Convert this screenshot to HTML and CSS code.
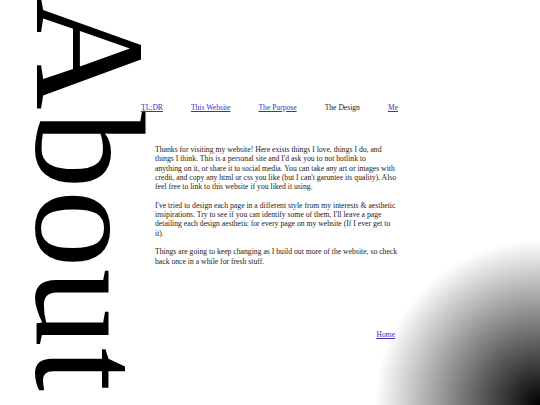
FILE: index.html
```html
<!DOCTYPE html>
<html lang="en">
<head>
<meta charset="utf-8">
<title>About</title>
<link rel="stylesheet" href="styles.css">
</head>
<body>
<div class="page">
  <h1 class="title">About</h1>
  <div class="main">
    <nav class="nav">
      <a href="#tldr">TL;DR</a>
      <a href="#website">This Website</a>
      <a href="#purpose">The Purpose</a>
      <span class="current">The Design</span>
      <a href="#me">Me</a>
    </nav>
    <div class="article">
      <p>Thanks for visiting my website! Here exists things I love, things I do, and<br>
      things I think. This is a personal site and I'd ask you to not hotlink to<br>
      anything on it, or share it to social media. You can take any art or images with<br>
      credit, and copy any html or css you like (but I can't garuntee its quality). Also<br>
      feel free to link to this website if you liked it using.</p>
      <p>I've tried to design each page in a different style from my interests &amp; aesthetic<br>
      insipirations. Try to see if you can identify some of them, I'll leave a page<br>
      detailing each design aesthetic for every page on my website (If I ever get to<br>
      it).</p>
      <p>Things are going to keep changing as I build out more of the website, so check<br>
      back once in a while for fresh stuff.</p>
    </div>
    <div class="footer"><a href="#home">Home</a></div>
  </div>
</div>
</body>
</html>
```
FILE: styles.css
```css
html, body {
  margin: 0;
  padding: 0;
}
body {
  width: 540px;
  height: 405px;
  overflow: hidden;
  background: radial-gradient(circle at 100% 100%, #000 0, #fff 165px);
  font-family: "Liberation Serif", "Times New Roman", serif;
  color: #222;
}
.page {
  display: flex;
  align-items: flex-start;
}
.title {
  margin: -3px -38px 0 0;
  writing-mode: vertical-rl;
  font-family: "Liberation Serif", "Times New Roman", serif;
  font-weight: normal;
  font-size: 156px;
  line-height: 179px;
  width: 179px;
  letter-spacing: 1px;
  flex: none;
  color: #000;
}
.main {
  width: 258px;
  display: flex;
  flex-direction: column;
}
.nav {
  position: relative;
  margin-top: 103px;
  display: flex;
  gap: 28px;
  white-space: nowrap;
  font-size: 7.6px;
  line-height: 9px;
}
.nav > * {
  flex: none;
}
a {
  color: #3333cc;
}
.current {
  color: #222;
}
.article {
  margin-top: 33px;
  padding-left: 14px;
  width: 250px;
  font-size: 7.7px;
  line-height: 9.3px;
}
.article p {
  margin: 0 0 9.3px;
}
.footer {
  margin-top: 55px;
  text-align: right;
  padding-right: 4px;
  font-size: 7.6px;
  line-height: 9px;
}
```
